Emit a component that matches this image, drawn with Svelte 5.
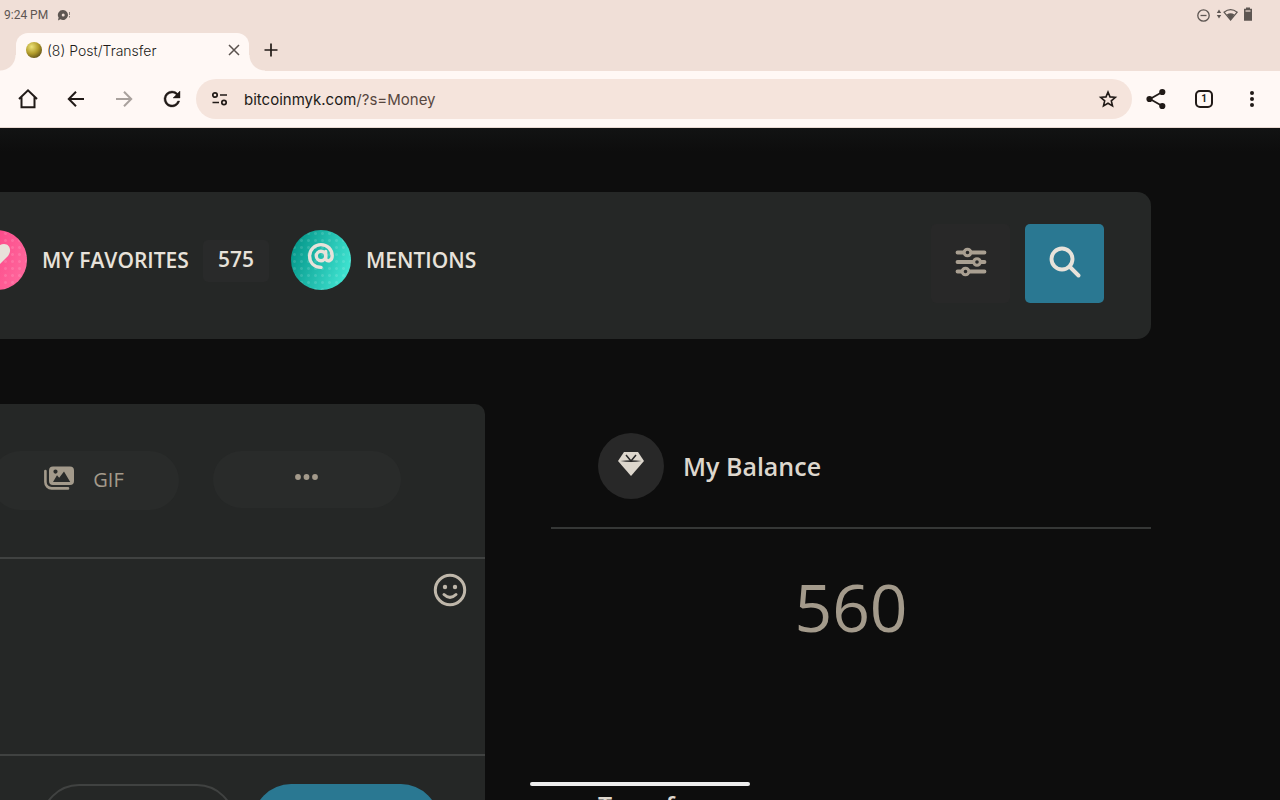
<script>
  const chips = [
    { id: 'heart', label: 'MY FAVORITES', count: '575' },
    { id: 'at', label: 'MENTIONS', count: null }
  ];
</script>

<div class="screen">
  <header class="chrome">
    <div class="status">
      <span class="clock">9:24 PM</span>
      <svg width="16" height="14" viewBox="0 0 16 14" aria-hidden="true">
        <path fill="#5d5652" fill-rule="evenodd" d="M7 2a5 5 0 1 1-2.600 9.300L2 12.600l.6-3A5 5 0 0 1 7 2zm.2 3.600a1.500 1.500 0 1 0 0 3 1.500 1.500 0 0 0 0-3z" />
        <path stroke="#8b817b" d="M13.500 4v3M13.500 8v1.500" />
      </svg>
      <span class="grow"></span>
      <svg width="58" height="18" viewBox="0 0 58 18" aria-hidden="true" fill="none" stroke="#5d5652">
        <circle cx="7.500" cy="9.500" r="5.700" stroke-width="1.300" />
        <path d="M4.500 9.500h6" stroke-width="1.300" />
        <path d="M23 3.500l2.200 3.500h-4.400zM23 12.500l2.200-3.500h-4.400z" fill="#5d5652" stroke="none" />
        <path d="M28 6.200q6.600-5 13.200 0L34.600 14z" stroke-width="1.200" />
        <path d="M30.800 8.500q3.800-2.400 7.600 0L34.600 14z" fill="#5d5652" stroke="none" />
        <path d="M50 1.500h4v1.300h2v12h-8v-12h2z" fill="#5d5652" stroke="none" />
        <path d="M49.500 5h5" stroke="#f0dfd7" stroke-width="1.200" />
      </svg>
    </div>
    <div class="tabs">
      <div class="tab">
        <span class="favicon"></span>
        <span class="title">(8) Post/Transfer</span>
        <button aria-label="Close tab">
          <svg width="12" height="12" viewBox="0 0 12 12" stroke="#5a524e" stroke-width="1.500"><path d="M1 1l10 10M11 1L1 11" /></svg>
        </button>
      </div>
      <button class="new" aria-label="New tab">
        <svg width="14" height="14" viewBox="0 0 14 14" stroke="#211a17" stroke-width="1.700"><path d="M7 .5v13M.5 7h13" /></svg>
      </button>
    </div>
    <div class="toolbar">
      <button aria-label="Home">
        <svg width="24" height="24" viewBox="0 0 24 24" fill="none" stroke="#211a17" stroke-width="2"><path d="M3 12l9-8.700L21 12M5.500 10v10.200h13V10" /></svg>
      </button>
      <button aria-label="Back">
        <svg width="24" height="24" viewBox="0 0 24 24" fill="none" stroke="#211a17" stroke-width="2"><path d="M20 12H5.500M12 4.700L4.800 12l7.200 7.300" /></svg>
      </button>
      <button aria-label="Forward" disabled>
        <svg width="24" height="24" viewBox="0 0 24 24" fill="none" stroke="#a9a19d" stroke-width="2"><path d="M4 12h14.500M12 4.700l7.200 7.300-7.200 7.300" /></svg>
      </button>
      <button aria-label="Reload">
        <svg width="24" height="24" viewBox="0 0 24 24" fill="#211a17" stroke="#211a17" stroke-width=".4"><path d="M17.650 6.350A7.960 7.960 0 0 0 12 4a8 8 0 1 0 7.730 10h-2.080A6 6 0 1 1 12 6c1.660 0 3.140.69 4.220 1.780L13 11h7V4z" /></svg>
      </button>
      <div class="omnibox">
        <svg width="18" height="16" viewBox="0 0 18 16" fill="none" stroke="#211a17" stroke-width="1.700">
          <circle cx="4" cy="4" r="2.200" /><path d="M9 4h7M1.500 11.500H8" /><circle cx="13" cy="11.500" r="2.200" />
        </svg>
        <a class="url" href="#top">bitcoinmyk.com<span>/?s=Money</span></a>
        <button aria-label="Bookmark">
          <svg width="20" height="20" viewBox="0 0 20 20" fill="none" stroke="#211a17" stroke-width="1.600"><path d="M10 3l2 4.900 5.300.4-4 3.500 1.200 5.100L10 14.200l-4.500 2.700 1.200-5.100-4-3.500 5.300-.4z" /></svg>
        </button>
      </div>
      <button aria-label="Share">
        <svg width="24" height="24" viewBox="0 0 24 24" fill="#211a17" stroke="#211a17" stroke-width="1.800"><path fill="none" d="M18.300 5L6 12l12.300 7" /><circle cx="18.300" cy="5" r="2.200" /><circle cx="5.500" cy="12" r="2.200" /><circle cx="18.300" cy="19" r="2.200" /></svg>
      </button>
      <button aria-label="Tabs"><span class="count">1</span></button>
      <button aria-label="Menu">
        <svg width="24" height="24" viewBox="0 0 24 24" fill="#211a17"><circle cx="12" cy="6" r="2" /><circle cx="12" cy="12" r="2" /><circle cx="12" cy="18" r="2" /></svg>
      </button>
    </div>
  </header>

  <main id="top">
    <nav class="panel">
      {#each chips as chip}
        <a class="chip" href="#{chip.id}">
          <span class="badge {chip.id}">
            {#if chip.id === 'heart'}
              <svg width="28" height="26" viewBox="0 0 28 26" fill="#e8e2da"><path d="M14 24L3 13C-1 8 1 1 7 1c3 0 5.500 1.500 7 4 1.500-2.500 4-4 7-4 6 0 8 7 4 12z" /></svg>
            {:else}
              <svg width="28" height="28" viewBox="0 0 28 28" fill="none" stroke="#e8e2da" stroke-width="3.400" stroke-linecap="round"><circle cx="14" cy="14" r="4.700" /><path d="M18.700 9.500v6.500c0 4.500 6.500 3.500 6.500-2C25.200 7 20 2.600 14 2.600S2.600 7.500 2.600 14 7 25 14 25.400" /></svg>
            {/if}
          </span>
          <span>{chip.label}</span>
          {#if chip.count}<span class="number">{chip.count}</span>{/if}
        </a>
      {/each}
      <span class="grow"></span>
      <button class="square" aria-label="Filters">
        <svg width="32" height="30" viewBox="0 0 32 30" fill="#282828" stroke="#a99f91" stroke-width="3.800" stroke-linecap="round">
          <path d="M2.500 5.500h27M2.500 15h27M2.500 24.500h27" />
          <g stroke-width="3"><circle cx="12.500" cy="5.500" r="3.300" /><circle cx="22" cy="15" r="3.300" /><circle cx="10.500" cy="24.500" r="3.300" /></g>
        </svg>
      </button>
      <button class="square search" aria-label="Search">
        <svg width="32" height="32" viewBox="0 0 32 32" fill="none" stroke="#e8e2da" stroke-width="3.900" stroke-linecap="round"><circle cx="13" cy="13" r="10.500" /><path d="M21 21l8.500 8.500" /></svg>
      </button>
    </nav>

    <div class="columns">
      <section class="composer">
        <div class="tools">
          <button class="pill">
            <svg width="30" height="24" viewBox="0 0 30 24">
              <path fill="#a39a8b" fill-rule="evenodd" d="M9 .5h17a4 4 0 0 1 4 4V15a4 4 0 0 1-4 4H9a4 4 0 0 1-4-4V4.500a4 4 0 0 1 4-4zm0 15.500h17.200L20 5.500l-4.800 6.300L13 9.300zM11.500 3.500a2.100 2.100 0 1 0 0 4.200 2.100 2.100 0 0 0 0-4.200z" />
              <path fill="none" stroke="#a39a8b" stroke-width="2.600" stroke-linecap="round" d="M1.400 5v11a6.300 6.300 0 0 0 6.300 6.400H24" />
            </svg>
            GIF
          </button>
          <button class="pill more" aria-label="More">
            <svg width="24" height="6" viewBox="0 0 24 6" fill="#a39a8b"><circle cx="4" cy="3" r="2.900" /><circle cx="12.500" cy="3" r="2.900" /><circle cx="21" cy="3" r="2.900" /></svg>
          </button>
        </div>
        <div class="editor">
          <button aria-label="Emoji">
            <svg width="34" height="34" viewBox="0 0 34 34" fill="none" stroke="#bfb7aa" stroke-width="3" stroke-linecap="round"><circle cx="17" cy="17" r="14.700" /><path d="M11 21.500q6 5.800 12 0" /><g fill="#bfb7aa" stroke="none"><circle cx="12" cy="14" r="2.200" /><circle cx="22" cy="14" r="2.200" /></g></svg>
          </button>
        </div>
        <div class="actions">
          <button class="outline" aria-label="Cancel"></button>
          <button class="primary" aria-label="Post"></button>
        </div>
      </section>

      <aside>
        <div class="heading">
          <span class="gem">
            <svg width="28" height="26" viewBox="0 0 28 26"><path fill="#ddd7cd" d="M7 1h14l6 9-13 15L1 10z" /><path fill="#282828" d="M3.500 10q10.500-1.600 21 0-10.500 1.800-21 0z" /><path fill="none" stroke="#282828" stroke-width="1.500" d="M9 4l5 6 5-6" /></svg>
          </span>
          <h2>My Balance</h2>
        </div>
        <p class="amount">560</p>
        <h2 class="transfer">Transfer</h2>
      </aside>
    </div>
  </main>
  <div class="handle"></div>
</div>

<style>
  :global(body) { margin: 0; background: #0d0d0d; }
  .screen { height: 100vh; overflow: hidden; display: flex; flex-direction: column; position: relative; font-family: "Open Sans", "Noto Sans", sans-serif; }
  button { border: 0; padding: 0; margin: 0; background: none; font: inherit; color: inherit; display: flex; align-items: center; justify-content: center; }
  a { color: inherit; text-decoration: none; }
  svg { display: block; flex: none; }
  .grow { flex: 1; }

  .chrome { flex: none; background: #f0dfd7; color: #211a17; }
  .status { height: 33px; box-sizing: border-box; display: flex; align-items: center; padding: 0 26px 4px 4px; gap: 8px; font: 12px Roboto, sans-serif; color: #5d5652; }
  .tabs { display: flex; height: 38px; padding-left: 16px; }
  .tab { width: 233px; box-sizing: border-box; padding: 0 9px 4px 10px; display: flex; align-items: center; background: #fff8f5; border-radius: 12px 12px 0 0; position: relative; font: 300 14px Inter, sans-serif; }
  .tab::before, .tab::after { content: ""; position: absolute; bottom: 0; width: 16px; height: 16px; }
  .tab::before { left: -16px; background: radial-gradient(circle at 0 0, transparent 15px, #fff8f5 16px); }
  .tab::after { right: -16px; background: radial-gradient(circle at 100% 0, transparent 15px, #fff8f5 16px); }
  .favicon { width: 16px; height: 16px; border-radius: 50%; background: radial-gradient(circle at 35% 30%, #ece27a, #b29c2b 45%, #3f3210 95%); }
  .title { flex: 1; padding-left: 5px; }
  .new { width: 44px; padding-bottom: 4px; }
  .toolbar { height: 57px; box-sizing: border-box; border-bottom: 1px solid #e9d9d2; display: flex; align-items: center; background: #fff8f5; padding: 0 4px; }
  .toolbar > button { width: 48px; height: 48px; }
  .omnibox { flex: 1; height: 40px; box-sizing: border-box; border-radius: 20px; background: #f5e4dc; display: flex; align-items: center; padding: 0 14px 0 15px; gap: 15px; font: 15px Inter, sans-serif; }
  .url { flex: 1; }
  .url span { color: #57473f; }
  .count { width: 18px; height: 18px; box-sizing: border-box; border: 2px solid #211a17; border-radius: 5px; font: bold 10px/14px Roboto, sans-serif; text-align: center; }

  main { flex: 1; min-height: 0; overflow: hidden; padding: 64px 129px 0 0; background: linear-gradient(#121313, #0d0d0d 24px); color: #e8e2da; }
  .panel { height: 147px; box-sizing: border-box; padding: 32px 47px 0 0; display: flex; align-items: flex-start; background: #252726; border-radius: 0 14px 14px 0; }
  .chip { display: flex; align-items: center; font-size: 21px; font-weight: 600; margin: 6px 22px 0 0; }
  .chip:first-child { margin-left: -33px; }
  .badge { width: 60px; height: 60px; border-radius: 50%; margin-right: 15px; display: flex; align-items: center; justify-content: center; padding-bottom: 8px; box-sizing: border-box; }
  .heart { background: radial-gradient(circle, #ffffff20 1px, transparent 2px) 0 0 / 7px 7px, linear-gradient(110deg, #fb357c, #ff6da0); }
  .at { background: radial-gradient(circle, #ffffff20 1px, transparent 2px) 0 0 / 7px 7px, linear-gradient(110deg, #05988b 10%, #48eedb); }
  .number { margin-left: 14px; padding: 0 15px; height: 42px; line-height: 38px; box-sizing: border-box; margin-top: 2px; background: #292a2a; border-radius: 5px; }
  .square { width: 79px; height: 79px; background: #282828; border-radius: 5px; margin-left: 15px; padding-bottom: 4px; }
  .search { background: #2a7892; }

  .columns { display: grid; grid-template-columns: minmax(0, 485fr) minmax(0, 600fr); gap: 66px; padding-top: 65px; }
  .composer { background: #252726; border-radius: 0 10px 0 0; }
  .tools { height: 153px; padding-top: 47px; box-sizing: border-box; display: flex; align-items: flex-start; gap: 34px; margin-left: -9px; }
  .pill { width: 188px; height: 59px; border-radius: 30px; background: #292b2a; color: #a39a8b; font-size: 20px; gap: 19px; padding: 0 2px 2px 0; box-sizing: border-box; }
  .pill svg { margin-bottom: 4px; }
  .more { height: 57px; }
  .editor { height: 199px; box-sizing: border-box; border: solid #404241; border-width: 2px 0; padding: 14px 18px 0 0; display: flex; justify-content: flex-end; align-items: flex-start; }
  .actions { display: flex; gap: 18px; justify-content: flex-end; padding: 28px 46px 29px 0; }
  .actions button { width: 194px; height: 76px; border-radius: 38px; }
  .outline { border: 2px solid #404241; box-sizing: border-box; }
  .actions .primary { width: 186px; background: #2a7892; }

  .heading { display: flex; align-items: center; gap: 19px; padding: 29px 0 28px 47px; border-bottom: 2px solid #353736; }
  .gem { width: 66px; height: 66px; border-radius: 50%; background: #282828; display: flex; align-items: center; justify-content: center; padding-bottom: 4px; box-sizing: border-box; }
  h2 { margin: 0; font-size: 25px; line-height: 36px; font-weight: 600; color: #ddd7cd; }
  .amount { margin: 0; padding-top: 32px; text-align: center; font-size: 66px; line-height: 90px; color: #a39a8b; }
  .transfer { padding: 136px 0 0 47px; }
  .handle { position: absolute; bottom: 14px; left: 50%; width: 220px; height: 4px; margin-left: -110px; border-radius: 2px; background: #ececec; }
</style>
